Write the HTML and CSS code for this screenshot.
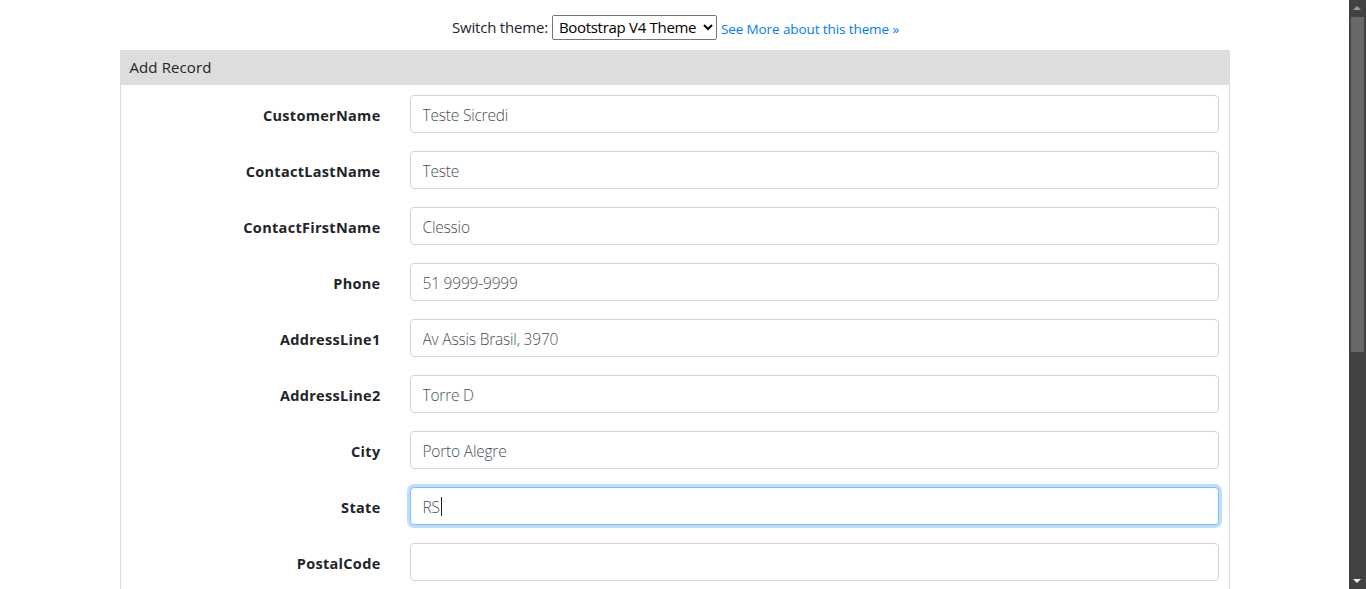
FILE: index.html
```html
<!DOCTYPE html>
<html lang="en">
<head>
<meta charset="utf-8">
<title>Add Record</title>
<link rel="stylesheet" href="styles.css">
</head>
<body>
<div class="page">
  <div class="theme-bar">
    <span class="theme-label">Switch theme:</span>
    <select class="theme-select"><option>Bootstrap V4 Theme</option></select>
    <a class="theme-link" href="#">See More about this theme »</a>
  </div>
  <div class="panel">
    <div class="panel-header">Add Record</div>
    <div class="panel-body">
      <div class="row"><label class="lbl">CustomerName</label><input class="field" value="Teste Sicredi"></div>
      <div class="row"><label class="lbl">ContactLastName</label><input class="field" value="Teste"></div>
      <div class="row"><label class="lbl">ContactFirstName</label><input class="field" value="Clessio"></div>
      <div class="row"><label class="lbl">Phone</label><input class="field" value="51 9999-9999"></div>
      <div class="row"><label class="lbl">AddressLine1</label><input class="field" value="Av Assis Brasil, 3970"></div>
      <div class="row"><label class="lbl">AddressLine2</label><input class="field" value="Torre D"></div>
      <div class="row"><label class="lbl">City</label><input class="field" value="Porto Alegre"></div>
      <div class="row"><label class="lbl">State</label><div class="field focused">RS<span class="caret"></span></div></div>
      <div class="row"><label class="lbl">PostalCode</label><input class="field" value=""></div>
    </div>
  </div>
</div>
<div class="scrollbar">
  <div class="sb-arrow sb-up"></div>
  <div class="sb-thumb"></div>
  <div class="sb-arrow sb-down"></div>
</div>
</body>
</html>
```

FILE: styles.css
```css
html, body {
  margin: 0;
  padding: 0;
  overflow: hidden;
  height: 100%;
}
body {
  font-family: "Open Sans", "Noto Sans", sans-serif;
  color: #212529;
  background: #fff;
}
.page {
  width: 1349px;
}
.theme-bar {
  height: 50px;
  display: flex;
  justify-content: center;
  align-items: center;
  gap: 4px;
  font-size: 15px;
  padding-top: 4px;
  padding-left: 2px;
  box-sizing: border-box;
}
.theme-label {
  color: #212529;
  letter-spacing: -0.2px;
}
.theme-select {
  font-family: "Open Sans", sans-serif;
  font-size: 15px;
  height: 25px;
  width: 165px;
  border: 1px solid #767676;
  border-radius: 2px;
  background: #fff;
  color: #000;
  padding: 0 2px;
  letter-spacing: -0.3px;
}
.theme-link {
  color: #007bff;
  text-decoration: none;
  font-size: 13.5px;
  letter-spacing: -0.1px;
  padding-top: 4px;
}
.panel {
  width: 1110px;
  margin: 0 auto;
  border-left: 1px solid #dcdcdc;
  border-right: 1px solid #dcdcdc;
  box-sizing: border-box;
}
.panel-header {
  height: 35px;
  background: #dddddd;
  display: flex;
  align-items: center;
  padding-left: 10px;
  padding-bottom: 2px;
  box-sizing: border-box;
  margin-left: -1px;
  margin-right: -1px;
  font-size: 15px;
  color: #212529;
  letter-spacing: 0.1px;
}
.panel-body {
  padding: 10px 10px 20px 0;
  display: flex;
  flex-direction: column;
  gap: 18px;
}
.row {
  display: grid;
  grid-template-columns: 260px 1fr;
  column-gap: 29px;
  align-items: center;
}
.lbl {
  text-align: right;
  font-weight: 700;
  font-size: 14.5px;
  letter-spacing: 0.3px;
  color: #212529;
  padding-top: 2px;
}
.field {
  height: 38px;
  box-sizing: border-box;
  border: 1px solid #ced4da;
  border-radius: 4px;
  padding: 1px 12px 0;
  font-family: "Open Sans", sans-serif;
  font-weight: 300;
  font-size: 15.5px;
  color: #495057;
  background: #fff;
  outline: none;
  width: 100%;
  letter-spacing: -0.2px;
}
div.field {
  display: flex;
  align-items: center;
}
.field.focused {
  border-color: #80bdff;
  box-shadow: 0 0 0 3px rgba(0, 123, 255, 0.25);
}
.caret {
  display: inline-block;
  width: 1px;
  height: 19px;
  background: #222;
  margin-left: 1px;
}
.scrollbar {
  position: fixed;
  top: 0;
  right: 0;
  width: 17px;
  height: 100%;
  background: #424242;
  display: flex;
  flex-direction: column;
  align-items: center;
}
.sb-arrow {
  width: 17px;
  height: 17px;
  position: relative;
}
.sb-up::after,
.sb-down::after {
  content: "";
  position: absolute;
  left: 4px;
  width: 0;
  height: 0;
  border-left: 4px solid transparent;
  border-right: 4px solid transparent;
}
.sb-up::after {
  top: 6px;
  border-bottom: 4px solid #9e9e9e;
}
.sb-down {
  margin-top: auto;
}
.sb-down::after {
  top: 7px;
  border-top: 4px solid #f0f0f0;
}
.sb-thumb {
  width: 13px;
  height: 335px;
  background: #686868;
}
```
